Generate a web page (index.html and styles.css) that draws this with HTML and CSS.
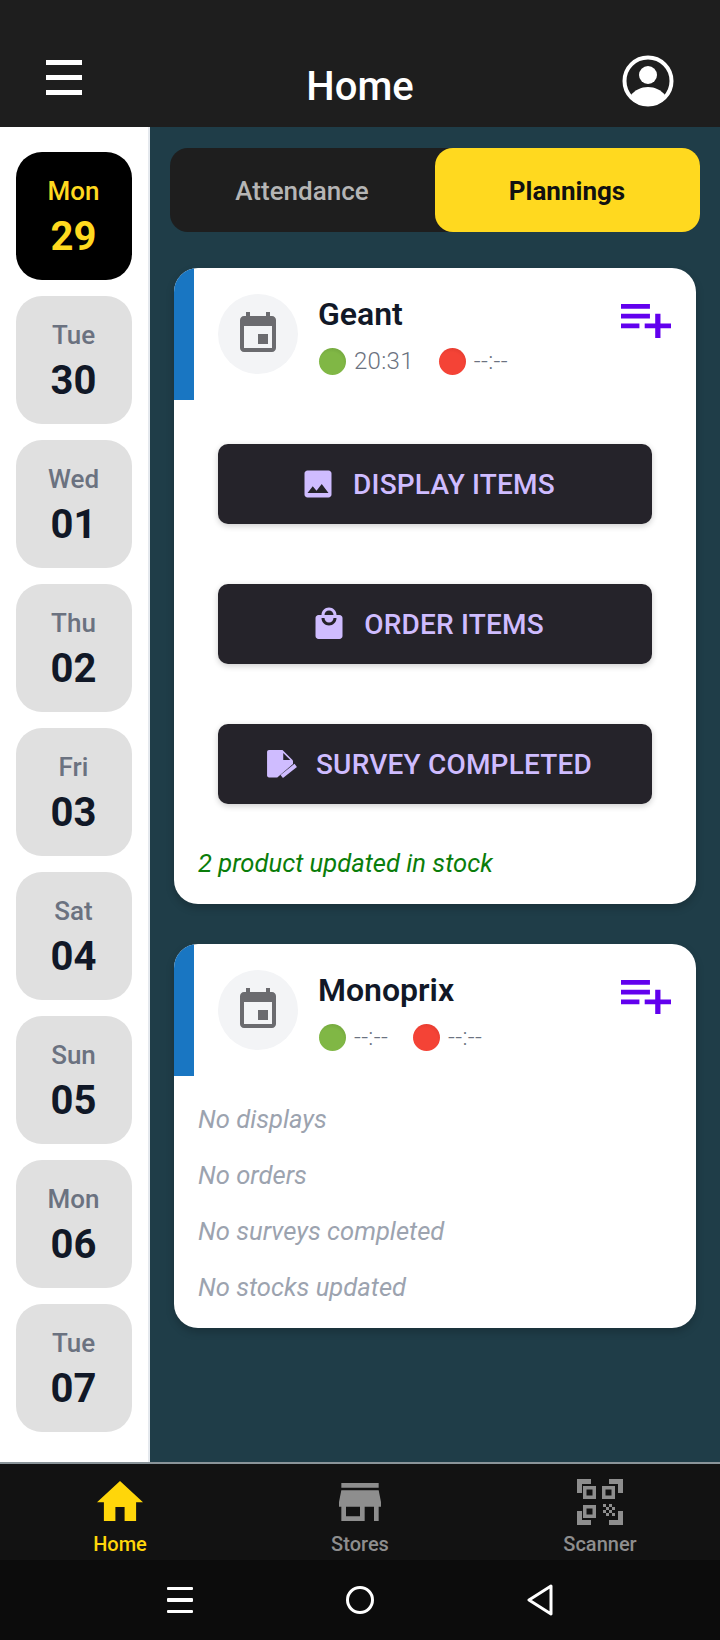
FILE: index.html
```html
<!DOCTYPE html>
<html lang="en">
<head>
  <meta charset="UTF-8">
  <meta name="viewport" content="width=device-width, initial-scale=1.0">
  <title>Home</title>
  <link rel="stylesheet" href="styles.css">
</head>
<body>
  <div class="app">

    <header class="topbar">
      <div class="menu-icon"><span></span><span></span><span></span></div>
      <h1>Home</h1>
      <svg class="user-icon" viewBox="0 0 52 52">
        <circle cx="26" cy="26" r="23.5" fill="none" stroke="#fff" stroke-width="4"/>
        <circle cx="26" cy="20" r="9" fill="#fff"/>
        <path fill="#fff" d="M9 40c4-5 10-8 17-8s13 3 17 8c-4 6-10 10-17 10S13 46 9 40z"/>
      </svg>
    </header>

    <div class="content">
      <aside class="days">
        <div class="day active"><span class="day-name">Mon</span><span class="day-num">29</span></div>
        <div class="day"><span class="day-name">Tue</span><span class="day-num">30</span></div>
        <div class="day"><span class="day-name">Wed</span><span class="day-num">01</span></div>
        <div class="day"><span class="day-name">Thu</span><span class="day-num">02</span></div>
        <div class="day"><span class="day-name">Fri</span><span class="day-num">03</span></div>
        <div class="day"><span class="day-name">Sat</span><span class="day-num">04</span></div>
        <div class="day"><span class="day-name">Sun</span><span class="day-num">05</span></div>
        <div class="day"><span class="day-name">Mon</span><span class="day-num">06</span></div>
        <div class="day"><span class="day-name">Tue</span><span class="day-num">07</span></div>
      </aside>

      <main class="main">
        <div class="tabs">
          <div class="tab">Attendance</div>
          <div class="tab selected">Plannings</div>
        </div>

        <section class="card">
          <div class="card-head">
            <div class="avatar">
              <svg viewBox="0 0 24 24"><path d="M17 12h-5v5h5v-5zM16 1v2H8V1H6v2H5c-1.11 0-1.99.9-1.99 2L3 19c0 1.1.89 2 2 2h14c1.1 0 2-.9 2-2V5c0-1.1-.9-2-2-2h-1V1h-2zm3 18H5V8h14v11z"/></svg>
            </div>
            <div class="store-info">
              <h2>Geant</h2>
              <div class="times">
                <span class="dot green"></span><span class="time">20:31</span>
                <span class="dot red"></span><span class="time">--:--</span>
              </div>
            </div>
            <svg class="add-icon" viewBox="3 6 19 14" preserveAspectRatio="none"><path d="M14 10H3v2h11v-2zm0-4H3v2h11V6zm4 8v-4h-2v4h-4v2h4v4h2v-4h4v-2h-4zM3 16h7v-2H3v2z"/></svg>
          </div>

          <div class="actions">
            <a class="action-btn">
              <svg viewBox="0 0 24 24"><path d="M21 19V5c0-1.1-.9-2-2-2H5c-1.1 0-2 .9-2 2v14c0 1.1.9 2 2 2h14c1.1 0 2-.9 2-2zM8.500 13.500l2.500 3.010L14.500 12l4.500 6H5l3.500-4.500z"/></svg>
              DISPLAY ITEMS
            </a>
            <a class="action-btn">
              <svg viewBox="0 0 24 24"><path d="M19 6h-2c0-2.760-2.240-5-5-5S7 3.240 7 6H5c-1.100 0-1.990.9-1.990 2L3 20c0 1.100.9 2 2 2h14c1.100 0 2-.9 2-2V8c0-1.100-.9-2-2-2zm-7-3c1.660 0 3 1.340 3 3H9c0-1.660 1.340-3 3-3zm0 10c-2.760 0-5-2.240-5-5h2c0 1.660 1.340 3 3 3s3-1.340 3-3h2c0 2.760-2.240 5-5 5z"/></svg>
              ORDER ITEMS
            </a>
            <a class="action-btn">
              <svg viewBox="0 0 24 24">
                <path d="M4 2.700h9l7 7v2.300L9.500 21H4c-.7 0-1.300-.6-1.300-1.300V4c0-.7.6-1.300 1.300-1.300z"/>
                <path fill="#25232a" d="M13.500 4.700v4.600h4.700z"/>
                <path stroke="#cfbcff" stroke-width="2.600" d="M12.500 20.300L21.800 12.900"/>
              </svg>
              SURVEY COMPLETED
            </a>
          </div>

          <p class="stock-note">2 product updated in stock</p>
        </section>

        <section class="card">
          <div class="card-head">
            <div class="avatar">
              <svg viewBox="0 0 24 24"><path d="M17 12h-5v5h5v-5zM16 1v2H8V1H6v2H5c-1.11 0-1.99.9-1.99 2L3 19c0 1.1.89 2 2 2h14c1.1 0 2-.9 2-2V5c0-1.1-.9-2-2-2h-1V1h-2zm3 18H5V8h14v11z"/></svg>
            </div>
            <div class="store-info">
              <h2>Monoprix</h2>
              <div class="times">
                <span class="dot green"></span><span class="time">--:--</span>
                <span class="dot red"></span><span class="time">--:--</span>
              </div>
            </div>
            <svg class="add-icon" viewBox="3 6 19 14" preserveAspectRatio="none"><path d="M14 10H3v2h11v-2zm0-4H3v2h11V6zm4 8v-4h-2v4h-4v2h4v4h2v-4h4v-2h-4zM3 16h7v-2H3v2z"/></svg>
          </div>

          <div class="empty-list">
            <p>No displays</p>
            <p>No orders</p>
            <p>No surveys completed</p>
            <p>No stocks updated</p>
          </div>
        </section>
      </main>
    </div>

    <nav class="tabbar">
      <div class="tabbar-item current">
        <svg viewBox="2 3 20 17" preserveAspectRatio="none" class="home-icon"><path d="M10 20v-6h4v6h5v-8h3L12 3 2 12h3v8z"/></svg>
        <span>Home</span>
      </div>
      <div class="tabbar-item">
        <svg viewBox="3 4 18 16" preserveAspectRatio="none" class="store-icon"><path d="M20 4H4v2h16V4zm1 10v-2l-1-5H4l-1 5v2h1v6h10v-6h4v6h2v-6h1zm-9 4H6v-4h6v4z"/></svg>
        <span>Stores</span>
      </div>
      <div class="tabbar-item">
        <svg viewBox="0 0 48 48" class="scan-icon">
          <path d="M1 1h14v5H6v9H1zM47 1H33v5h9v9h5zM1 47h14v-5H6v-9H1zM47 47H33v-5h9v-9h5z"/>
          <path fill-rule="evenodd" d="M7 8h13v13H7zM10.500 11.500v6h6v-6zM26 8h13v13H26zM29.500 11.500v6h6v-6zM7 27h13v13H7zM10.500 30.500v6h6v-6z"/>
          <path d="M27 26h3v3h-3zM33 26h3v3h-3zM30 29h3v3h-3zM36 29h3v3h-3zM27 32h3v3h-3zM33 32h3v3h-3zM30 35h3v3h-3zM36 35h3v3h-3z"/>
        </svg>
        <span>Scanner</span>
      </div>
    </nav>

    <div class="system-nav">
      <div class="sys-menu"><span></span><span></span><span></span></div>
      <div class="sys-home"></div>
      <svg class="sys-back" viewBox="0 0 26 32"><path d="M24 2L2 16l22 14z" fill="none" stroke="#fff" stroke-width="3" stroke-linejoin="round"/></svg>
    </div>

  </div>
</body>
</html>
```

FILE: styles.css
```css
:root {
  --bar-dark: #1e1e1e;
  --teal: #1f3d48;
  --yellow: #ffd91f;
  --tile: #e0e0e0;
  --text-dark: #111827;
  --text-muted: #6b7280;
  --btn-bg: #25232a;
  --btn-text: #cfbcff;
  --accent-blue: #1976c2;
  --purple: #6200ee;
}

* {
  box-sizing: border-box;
  margin: 0;
  padding: 0;
}

body {
  font-family: Roboto, 'Liberation Sans', sans-serif;
  background: #0c0c0c;
}

.app {
  display: flex;
  flex-direction: column;
  width: 720px;
  height: 1640px;
  overflow: hidden;
}

/* top bar */
.topbar {
  flex: 0 0 127px;
  display: grid;
  grid-template-columns: 1fr auto 1fr;
  align-items: end;
  padding: 0 46px 20px 46px;
  background: var(--bar-dark);
}

.topbar h1 {
  color: #fff;
  font-size: 40px;
  font-weight: 500;
  line-height: 46px;
  margin-bottom: -3px;
}

.menu-icon {
  display: flex;
  flex-direction: column;
  gap: 10px;
  width: 36px;
  margin-bottom: 12px;
}

.menu-icon span {
  display: block;
  height: 5px;
  background: #fff;
}

.user-icon {
  width: 52px;
  height: 52px;
  justify-self: end;
}

/* days column */
.content {
  flex: 1;
  display: flex;
  min-height: 0;
}

.days {
  flex: 0 0 150px;
  display: flex;
  flex-direction: column;
  gap: 16px;
  padding: 25px 0 0 16px;
  background: #fff;
  border-right: 2px solid #e5e9ee;
}

.day {
  display: flex;
  flex-direction: column;
  align-items: center;
  justify-content: center;
  gap: 8px;
  width: 116px;
  height: 128px;
  padding: 4px 1px 0 0;
  background: var(--tile);
  border-radius: 26px;
}

.day-name {
  color: var(--text-muted);
  font-size: 26px;
  font-weight: 500;
  line-height: 30px;
}

.day-num {
  color: var(--text-dark);
  font-size: 40px;
  font-weight: 700;
  line-height: 46px;
}

.day.active {
  background: #000;
}

.day.active .day-name,
.day.active .day-num {
  color: var(--yellow);
}

/* main column */
.main {
  flex: 1;
  padding: 21px 20px 0;
  background: var(--teal);
}

.tabs {
  display: flex;
  height: 84px;
  margin-bottom: 36px;
  background: var(--bar-dark);
  border-radius: 18px;
}

.tab {
  flex: 1;
  display: flex;
  align-items: center;
  justify-content: center;
  padding: 2px 1px 0 0;
  color: #b5b5b5;
  font-size: 26px;
  font-weight: 500;
}

.tab.selected {
  background: var(--yellow);
  color: #111;
  font-weight: 700;
  border-radius: 18px;
}

.card {
  margin: 0 4px 40px;
  background: #fff;
  border-radius: 24px;
  overflow: hidden;
  box-shadow: 0 4px 8px rgba(0, 0, 0, 0.2);
}

.card-head {
  display: flex;
  align-items: flex-start;
  height: 132px;
  padding: 26px 25px 0 24px;
  border-left: 20px solid var(--accent-blue);
}

.avatar {
  flex: 0 0 80px;
  display: flex;
  align-items: center;
  justify-content: center;
  height: 80px;
  margin-right: 20px;
  background: #f3f4f6;
  border-radius: 50%;
}

.avatar svg {
  width: 48px;
  height: 48px;
  fill: #6b6b6f;
}

.store-info {
  flex: 1;
}

.store-info h2 {
  color: var(--text-dark);
  font-size: 32px;
  font-weight: 600;
  line-height: 41px;
}

.times {
  display: flex;
  align-items: center;
  margin: 12px 0 0 1px;
}

.dot {
  width: 27px;
  height: 27px;
  margin-right: 8px;
  border-radius: 50%;
}

.dot.green {
  background: radial-gradient(circle at 45% 62%, #80b745 55%, #699a38 100%);
}

.dot.red {
  background: radial-gradient(circle at 45% 62%, #f44336 55%, #d9362b 100%);
}

.time {
  color: var(--text-muted);
  font-size: 24px;
  font-weight: 300;
  letter-spacing: 0.3px;
  margin-right: 25px;
}

.add-icon {
  width: 50px;
  height: 34px;
  margin-top: 10px;
  fill: var(--purple);
}

.actions {
  display: flex;
  flex-direction: column;
  gap: 60px;
  padding: 44px 44px 0;
}

.action-btn {
  display: flex;
  align-items: center;
  justify-content: center;
  gap: 17px;
  height: 80px;
  padding-right: 15px;
  background: var(--btn-bg);
  border-radius: 10px;
  color: var(--btn-text);
  font-size: 28px;
  font-weight: 500;
  letter-spacing: 0.2px;
  box-shadow: 0 2px 6px rgba(0, 0, 0, 0.2);
}

.action-btn svg {
  width: 36px;
  height: 36px;
  fill: currentColor;
}

.stock-note {
  padding: 42px 24px 24px;
  color: #0a7d0a;
  font-size: 25.6px;
  font-style: italic;
  line-height: 34px;
}

.empty-list {
  display: flex;
  flex-direction: column;
  gap: 24px;
  padding: 27px 24px 25px;
}

.empty-list p {
  color: #9ca3af;
  font-size: 25.6px;
  font-style: italic;
  line-height: 32px;
}

/* bottom tabs */
.tabbar {
  flex: 0 0 98px;
  display: grid;
  grid-template-columns: repeat(3, 1fr);
  background: #121212;
  border-top: 2px solid #8a9499;
}

.tabbar-item {
  display: flex;
  flex-direction: column;
  align-items: center;
  justify-content: flex-end;
  color: #8e8e8e;
  font-size: 20px;
  font-weight: 500;
  line-height: 24px;
  padding-bottom: 4px;
  fill: currentColor;
}

.tabbar-item.current {
  color: #ffd60a;
}

.home-icon {
  width: 46px;
  height: 40px;
  margin-bottom: 11px;
}

.store-icon {
  width: 42px;
  height: 38px;
  margin-bottom: 11px;
}

.scan-icon {
  width: 48px;
  height: 48px;
  margin-bottom: 6px;
}

/* android nav */
.system-nav {
  flex: 0 0 80px;
  display: grid;
  grid-template-columns: repeat(3, 180px);
  justify-content: center;
  justify-items: center;
  align-items: center;
  background: #0c0c0c;
}

.sys-menu {
  display: flex;
  flex-direction: column;
  gap: 8px;
  width: 26px;
}

.sys-menu span {
  display: block;
  height: 3.5px;
  background: #fff;
  border-radius: 1px;
}

.sys-home {
  width: 28px;
  height: 28px;
  border: 3px solid #fff;
  border-radius: 50%;
}

.sys-back {
  width: 26px;
  height: 32px;
}
```
